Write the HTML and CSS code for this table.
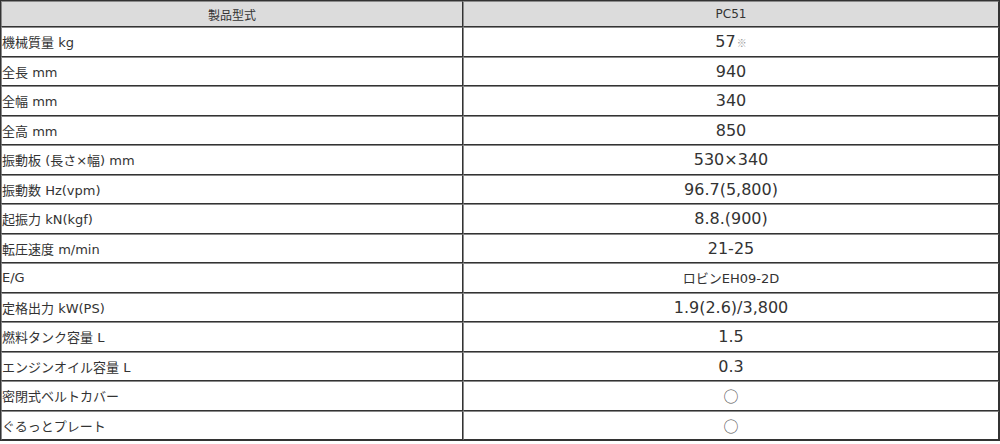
FILE: index.html
```html
<!DOCTYPE html>
<html lang="ja">
<head>
<meta charset="utf-8">
<title>PC51 仕様</title>
<link rel="stylesheet" href="styles.css">
</head>
<body>
<table class="spec">
  <colgroup><col class="c-label"><col class="c-value"></colgroup>
  <thead>
    <tr class="head"><th>製品型式</th><th>PC51</th></tr>
  </thead>
  <tbody>
    <tr><td class="label">機械質量 kg</td><td class="value">57<span class="note">※</span></td></tr>
    <tr><td class="label">全長 mm</td><td class="value">940</td></tr>
    <tr><td class="label">全幅 mm</td><td class="value">340</td></tr>
    <tr><td class="label">全高 mm</td><td class="value">850</td></tr>
    <tr><td class="label">振動板 (長さ×幅) mm</td><td class="value">530×340</td></tr>
    <tr><td class="label">振動数 Hz(vpm)</td><td class="value">96.7(5,800)</td></tr>
    <tr><td class="label">起振力 kN(kgf)</td><td class="value">8.8.(900)</td></tr>
    <tr><td class="label">転圧速度 m/min</td><td class="value">21-25</td></tr>
    <tr><td class="label">E/G</td><td class="value small">ロビンEH09-2D</td></tr>
    <tr><td class="label">定格出力 kW(PS)</td><td class="value">1.9(2.6)/3,800</td></tr>
    <tr><td class="label">燃料タンク容量 L</td><td class="value">1.5</td></tr>
    <tr><td class="label">エンジンオイル容量 L</td><td class="value">0.3</td></tr>
    <tr><td class="label">密閉式ベルトカバー</td><td class="value mark">○</td></tr>
    <tr><td class="label">ぐるっとプレート</td><td class="value mark">○</td></tr>
  </tbody>
</table>
</body>
</html>
```
FILE: styles.css
```css
html, body {
  margin: 0;
  padding: 0;
  background: #fff;
}
body {
  font-family: "DejaVu Sans", "Noto Sans CJK JP", sans-serif;
  color: #333;
}
.spec {
  width: 1000px;
  table-layout: fixed;
  border-collapse: separate;
  border-spacing: 0;
  border: 1px solid #333;
}
.c-label { width: 462px; }
.spec th,
.spec td {
  border-top: 1px solid #8a8a8a;
  border-left: 1px solid #8a8a8a;
  border-bottom: 1px solid #333;
  border-right: 1px solid #333;
  padding: 0;
  box-sizing: border-box;
}
.head th {
  height: 26px;
  background: #dcdcdc;
  font-weight: normal;
  font-size: 12px;
  text-align: center;
  color: #333;
}
tbody tr { height: 29.5px; }
.label {
  font-size: 13px;
  padding-left: 4px;
  text-align: left;
}
.value {
  font-size: 16px;
  text-align: center;
}
.value.small { font-size: 13px; }
.value.mark {
  font-family: "Noto Sans CJK JP", sans-serif;
  font-size: 15px;
  color: #555;
}
.note {
  font-family: "Noto Sans CJK JP", sans-serif;
  font-size: 10px;
  color: #999;
  margin-left: 1px;
}
```
